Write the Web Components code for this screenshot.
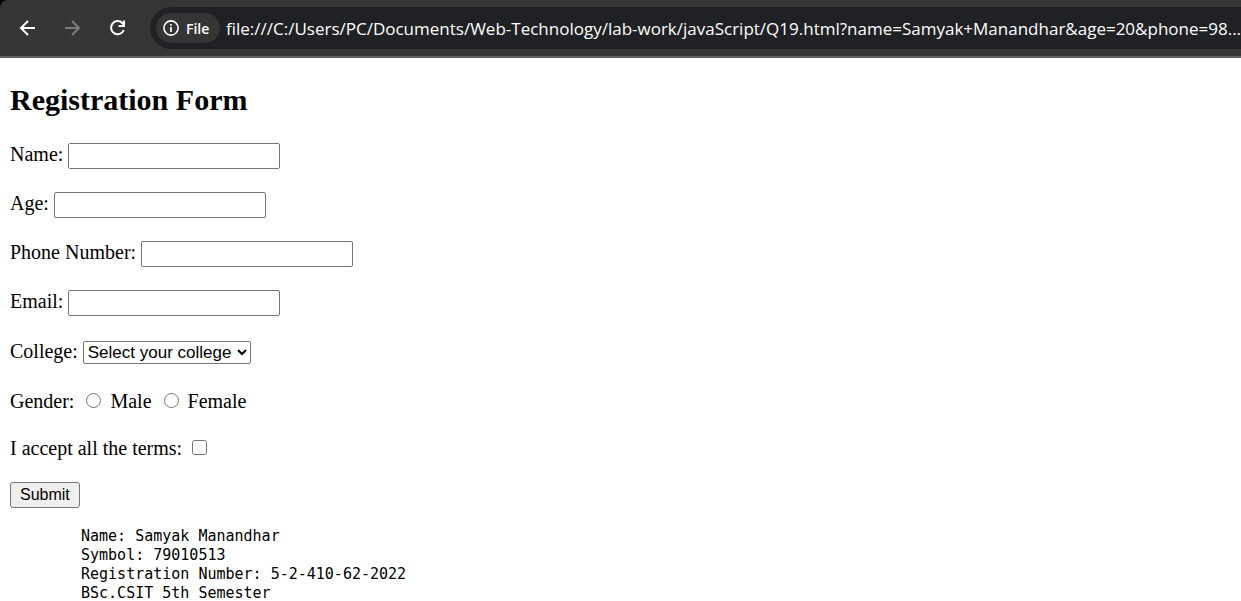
<!DOCTYPE html>
<html lang="en">
<head>
<meta charset="utf-8">
<meta name="viewport" content="width=device-width, initial-scale=1">
<title>Registration Form</title>
<style>
  body { margin: 0; background: #fff; color: #000; font-family: "Liberation Serif", serif; }
</style>
</head>
<body>
<browser-bar>file:///C:/Users/PC/Documents/Web-Technology/lab-work/javaScript/Q19.html?name=Samyak+Manandhar&amp;age=20&amp;phone=98...</browser-bar>
<registration-page></registration-page>

<script>
function define(name, html) {
  const template = document.createElement('template');
  template.innerHTML = html;
  customElements.define(name, class extends HTMLElement {
    constructor() {
      super();
      this.attachShadow({ mode: 'open' }).append(template.content.cloneNode(true));
    }
  });
}

define('browser-bar', `
<style>
  :host { display: block; background: #000; }
  .bar { display: flex; align-items: center; box-sizing: border-box; height: 58px; padding-left: 16px;
         background: #353535; border-bottom: 2px solid #5f5f5f; border-top-left-radius: 8px; }
  nav { display: flex; gap: 21px; flex: none; margin-right: 20px; }
  button { display: grid; place-items: center; width: 24px; height: 24px; padding: 0; border: 0; background: none; color: #fff; }
  button:disabled { color: #7d7d7d; }
  svg { display: block; fill: none; stroke: currentColor; stroke-width: 2; }
  .address { flex: 1; min-width: 0; display: flex; align-items: center; gap: 6px; box-sizing: border-box;
             height: 42px; padding-left: 6px; background: #202124; border-radius: 21px 0 0 21px; color: #fff; }
  .chip { display: flex; align-items: center; gap: 7px; flex: none; box-sizing: border-box; width: 64px; height: 30px; padding-left: 7px;
          border-radius: 15px; background: #353535; font: 600 14px "Open Sans", sans-serif; }
  .url { font: 17px "Open Sans", sans-serif; white-space: nowrap; }
</style>
<div class="bar">
  <nav aria-label="Browser">
    <button aria-label="Back"><svg width="24" height="24"><path d="M19 12H5.5M12 5L5 12L12 19"/></svg></button>
    <button aria-label="Forward" disabled><svg width="24" height="24"><path d="M4 12H17.5M11 5L18 12L11 19"/></svg></button>
    <button aria-label="Reload"><svg width="24" height="24"><path d="M17.8 14A6.6 6.6 0 1 1 16.5 7.2L18 9M18 4.5V10H12.5"/></svg></button>
  </nav>
  <div class="address">
    <span class="chip"><svg width="16" height="16"><circle cx="8" cy="8" r="7.1" stroke-width="1.6"/><path d="M8 7V12M8 4V5.8" stroke-width="1.7"/></svg>File</span>
    <span class="url"><slot></slot></span>
  </div>
</div>`);

define('form-row', `
<style>
  :host { display: flex; align-items: baseline; gap: 5px; height: 26px; font-size: 20px; line-height: 26px; }
  :host([choice]) { height: 23px; }
</style>
<slot></slot>`);

define('registration-page', `
<style>
  :host { display: block; padding: 24px 10px 0; }
  h2 { margin: 0 0 23px; font-size: 30px; line-height: 36px; }
  form, .texts { display: flex; flex-direction: column; gap: 23px; }
  form { gap: 24px; align-items: flex-start; }
  input, select, button { box-sizing: border-box; margin: 0; font: 16px "Liberation Sans", sans-serif; color: #000; }
  input[type=text], input[type=tel], input[type=email], input[type=number] {
    width: 212px; height: 26px; padding: 1px 2px; border: 1px solid #767676; border-radius: 2px; background: #fff; }
  input[type=number] { appearance: textfield; }
  select { width: 168px; height: 23px; padding: 0; border: 1px solid #767676; border-radius: 2px; background: #fff; font-size: 17px; }
  input[type=radio], input[type=checkbox] { width: 15px; height: 15px; margin-bottom: 3px; }
  input[type=radio] { margin-left: 7px; margin-right: 4px; }
  input[type=checkbox] { margin-left: 5px; }
  button { height: 26px; padding: 0 9px; border: 1px solid #767676; border-radius: 3px; background: #efefef; }
  pre { margin: 19px 0 0 71px; font: 15px/19px "DejaVu Sans Mono", monospace; }
</style>
<h2>Registration Form</h2>
<form onsubmit="return false">
  <div class="texts">
    <form-row><label for="name">Name:</label><input id="name" type="text"></form-row>
    <form-row><label for="age">Age:</label><input id="age" type="number"></form-row>
    <form-row><label for="phone">Phone Number:</label><input id="phone" type="tel"></form-row>
    <form-row><label for="email">Email:</label><input id="email" type="email"></form-row>
  </div>
  <form-row><label for="college">College:</label><select id="college"><option>Select your college</option></select></form-row>
  <form-row choice role="radiogroup" aria-label="Gender"><span>Gender:</span><input id="male" type="radio" name="gender"><label for="male">Male</label><input id="female" type="radio" name="gender"><label for="female">Female</label></form-row>
  <form-row choice><label for="terms">I accept all the terms:</label><input id="terms" type="checkbox"></form-row>
  <button type="submit">Submit</button>
</form>
<pre>Name: Samyak Manandhar
Symbol: 79010513
Registration Number: 5-2-410-62-2022
BSc.CSIT 5th Semester</pre>`);
</script>
</body>
</html>
